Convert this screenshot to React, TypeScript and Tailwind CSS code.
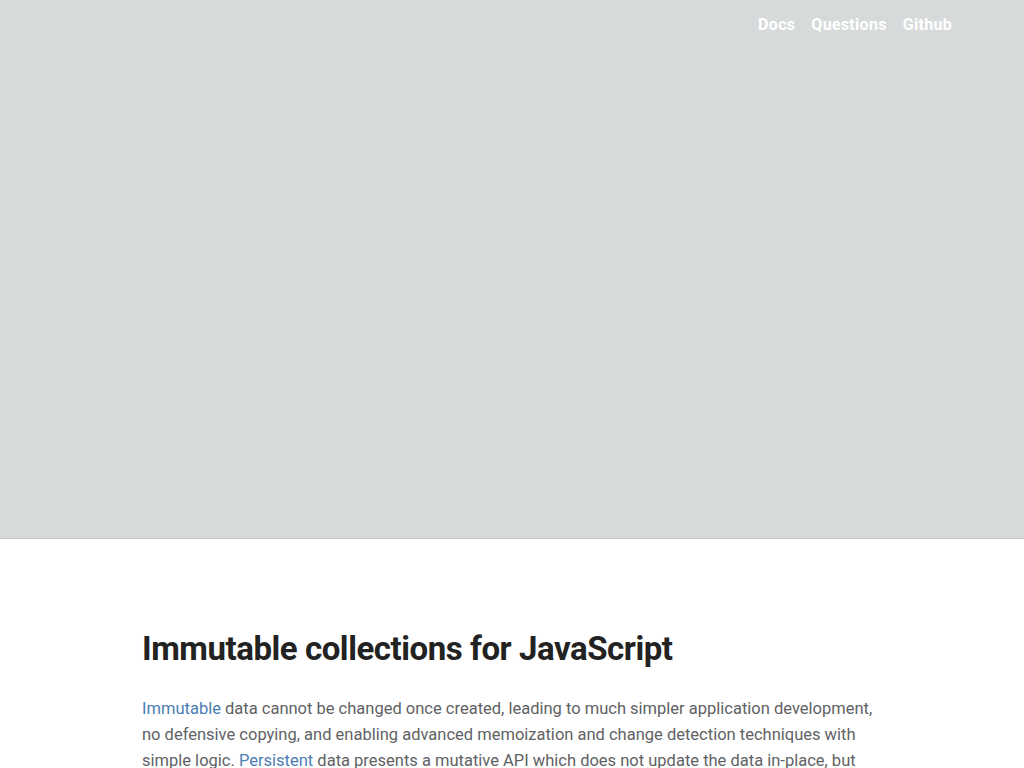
const NAV = ["Docs", "Questions", "Github"];

export default function App() {
  return (
    <div className="min-h-screen bg-white font-['Roboto',sans-serif]">
      <header className="h-[539px] border-b border-[#c6c9ca] bg-[#d7dadb]">
        <nav className="flex justify-end gap-4 pr-[72px] pt-[14px]">
          {NAV.map((n) => (
            <a key={n} href="#" className="text-[16px] font-bold leading-[22px] tracking-[0.3px] text-white">
              {n}
            </a>
          ))}
        </nav>
      </header>

      <main className="mx-auto w-[740px] pt-[88px]">
        <h1 className="text-[33px] font-bold leading-[44px] tracking-[-0.45px] text-[#222]">
          Immutable collections for JavaScript
        </h1>
        <p className="mt-[25px] text-[16.5px] leading-[26px] text-[#606264]">
          <a href="#" className="text-[#4a7db3]">Immutable</a> data cannot be changed once created, leading
          to much simpler application development,
          <br />
          no defensive copying, and enabling advanced memoization and change detection techniques with
          <br />
          simple logic. <a href="#" className="text-[#4a7db3]">Persistent</a> data presents a mutative API
          which does not update the data in-place, but instead always yields new updated data.
        </p>
      </main>
    </div>
  );
}
